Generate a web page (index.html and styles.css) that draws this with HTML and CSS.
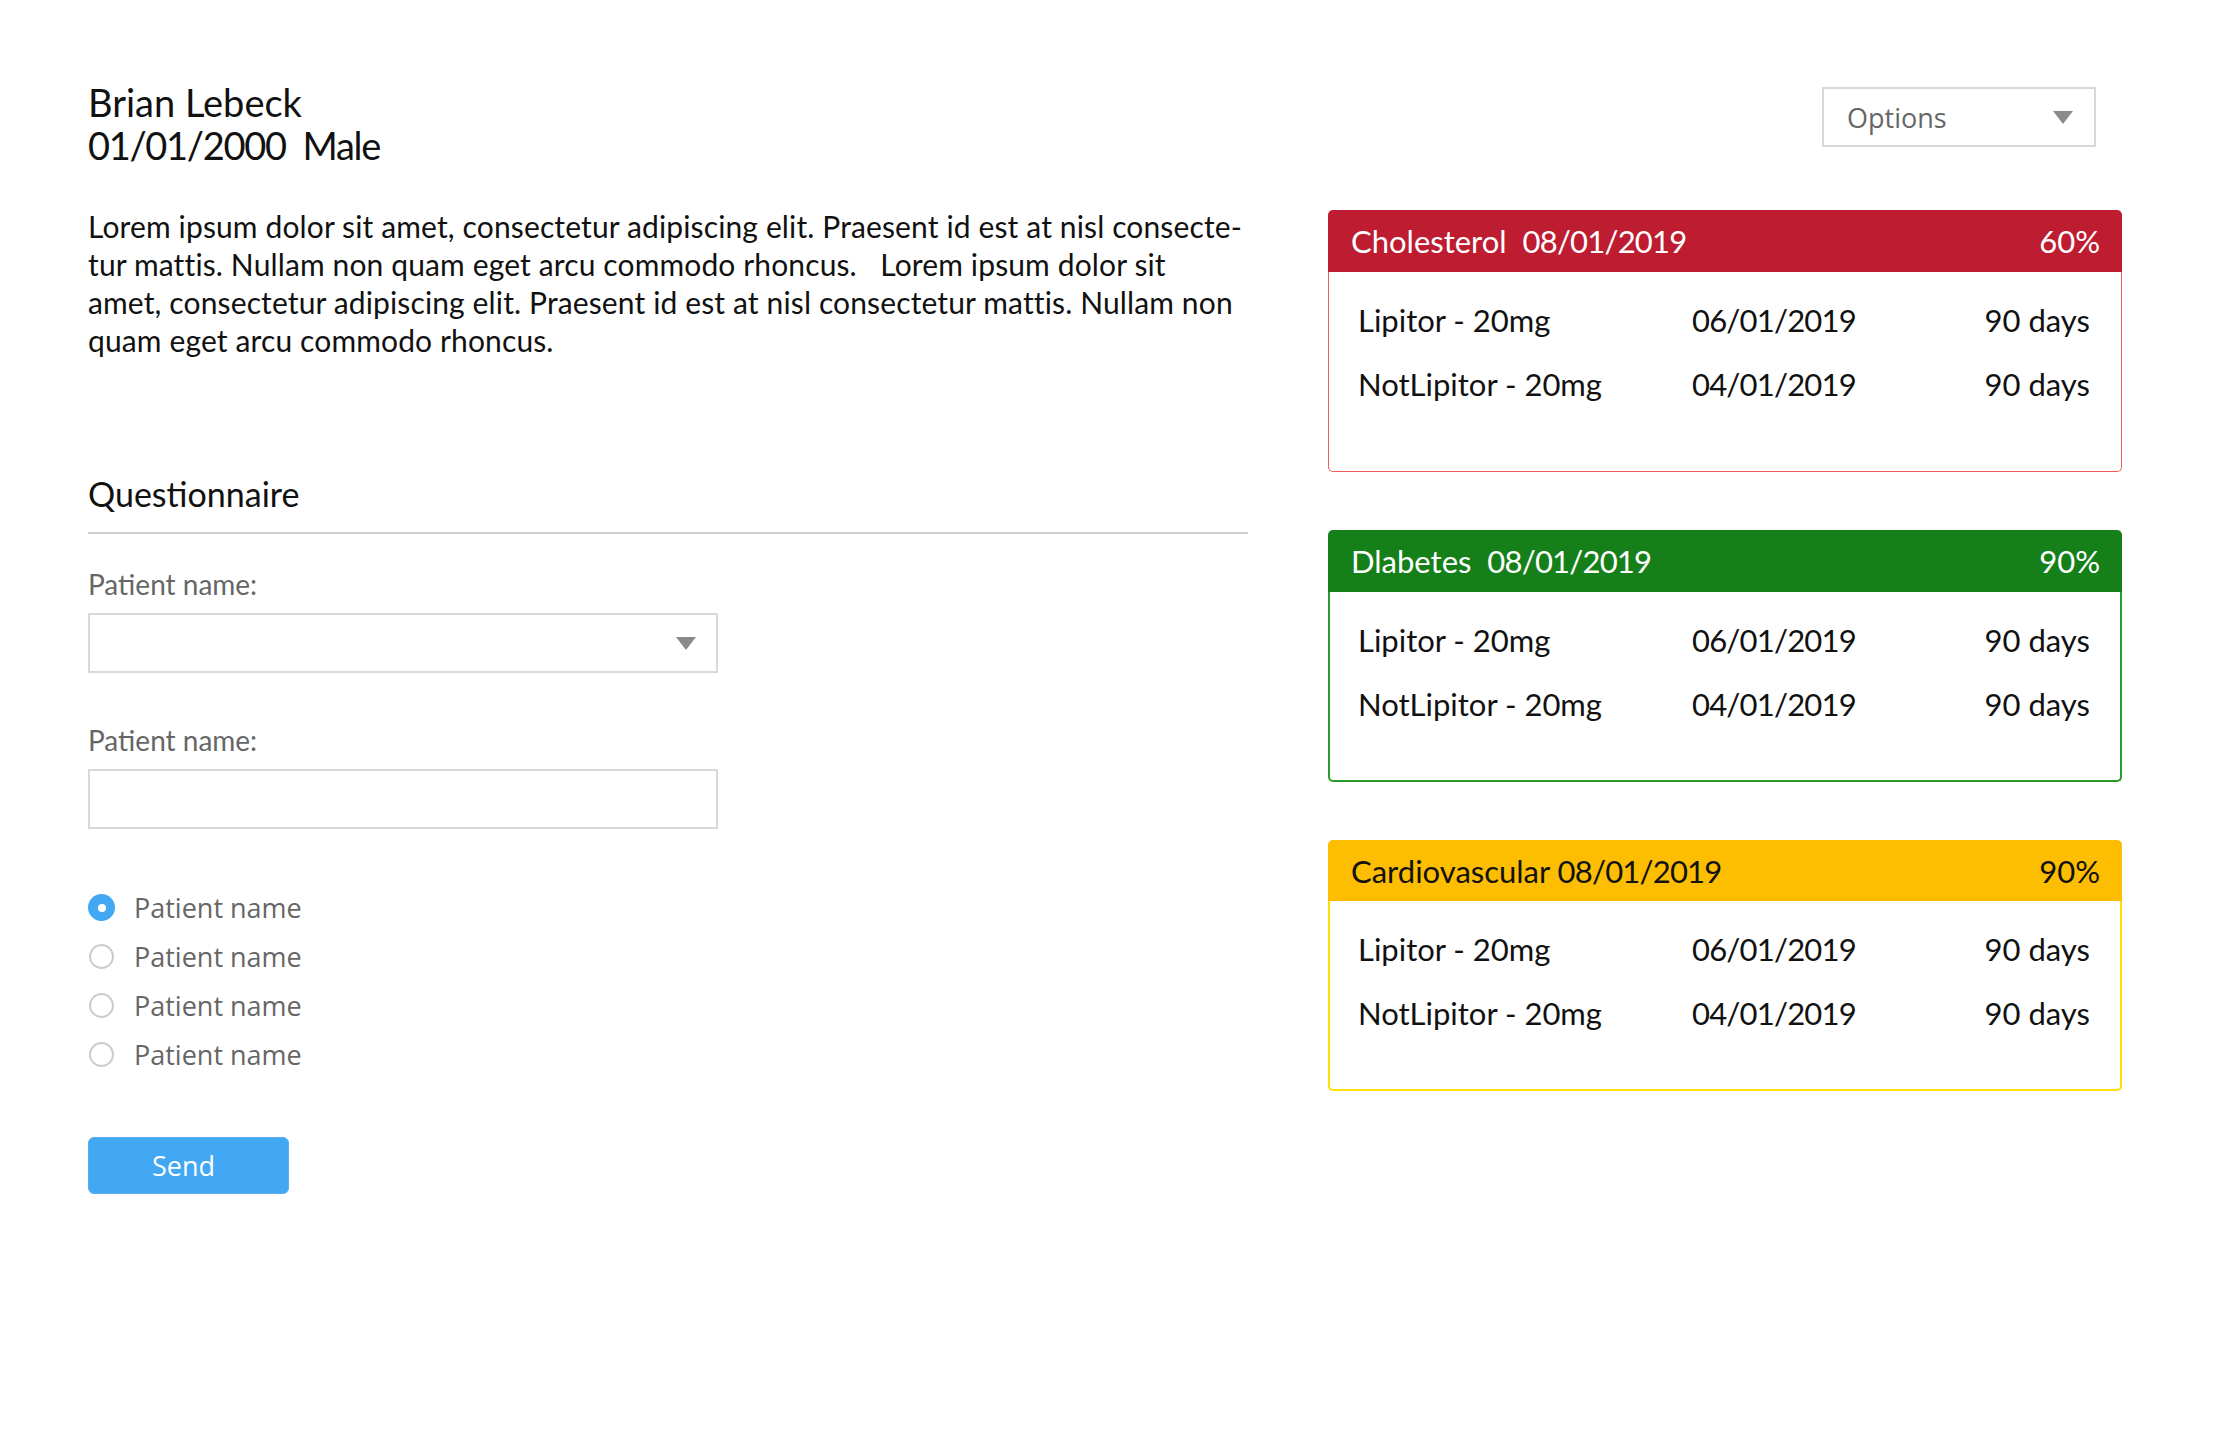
FILE: index.html
```html
<!DOCTYPE html>
<html>
<head>
<meta charset="utf-8">
<link rel="stylesheet" href="styles.css">
</head>
<body>
<div class="page">
  <div class="left">
    <div class="patient">
      <div class="patient-line">Brian Lebeck</div>
      <div class="patient-line patient-meta">01/01/2000&nbsp; Male</div>
    </div>
    <p class="bio">Lorem ipsum dolor sit amet, consectetur adipiscing elit. Praesent id est at nisl consecte-<br>tur mattis. Nullam non quam eget arcu commodo rhoncus.&nbsp;&nbsp; Lorem ipsum dolor sit<br>amet, consectetur adipiscing elit. Praesent id est at nisl consectetur mattis. Nullam non<br>quam eget arcu commodo rhoncus.</p>

    <section class="quest">
      <h2 class="quest-title">Questionnaire</h2>
      <div class="field field-first">
        <div class="field-label">Patient name:</div>
        <div class="box"><span class="caret"></span></div>
      </div>
      <div class="field field-second">
        <div class="field-label">Patient name:</div>
        <div class="box"></div>
      </div>
      <div class="radios">
        <div class="radio-row"><span class="radio radio-on"></span><span class="radio-label">Patient name</span></div>
        <div class="radio-row"><span class="radio"></span><span class="radio-label">Patient name</span></div>
        <div class="radio-row"><span class="radio"></span><span class="radio-label">Patient name</span></div>
        <div class="radio-row"><span class="radio"></span><span class="radio-label">Patient name</span></div>
      </div>
      <div class="send">Send</div>
    </section>
  </div>

  <div class="right">
    <div class="options-row">
      <div class="options"><span class="options-text">Options</span><span class="caret"></span></div>
    </div>

    <div class="card card-red">
      <div class="card-head"><span>Cholesterol&nbsp; <span class="num">08/01/2019</span></span><span>60%</span></div>
      <div class="card-body">
        <div class="med"><span>Lipitor - 20mg</span><span class="num">06/01/2019</span><span>90 days</span></div>
        <div class="med"><span>NotLipitor - 20mg</span><span class="num">04/01/2019</span><span>90 days</span></div>
      </div>
    </div>

    <div class="card card-green">
      <div class="card-head"><span>Dlabetes&nbsp; <span class="num">08/01/2019</span></span><span>90%</span></div>
      <div class="card-body">
        <div class="med"><span>Lipitor - 20mg</span><span class="num">06/01/2019</span><span>90 days</span></div>
        <div class="med"><span>NotLipitor - 20mg</span><span class="num">04/01/2019</span><span>90 days</span></div>
      </div>
    </div>

    <div class="card card-yellow">
      <div class="card-head"><span>Cardiovascular <span class="num">08/01/2019</span></span><span>90%</span></div>
      <div class="card-body">
        <div class="med"><span>Lipitor - 20mg</span><span class="num">06/01/2019</span><span>90 days</span></div>
        <div class="med"><span>NotLipitor - 20mg</span><span class="num">04/01/2019</span><span>90 days</span></div>
      </div>
    </div>
  </div>
</div>
</body>
</html>
```

FILE: styles.css
```css
* { box-sizing: border-box; }
html, body { margin: 0; padding: 0; background: #ffffff; }
body {
  font-family: Lato, "Open Sans", sans-serif;
  color: #111111;
}
.page {
  display: flex;
  gap: 80px;
  padding-left: 88px;
}
.left {
  width: 1160px;
  padding-top: 81px;
}
.patient-line {
  font-size: 38px;
  line-height: 43px;
}
.patient-meta {
  letter-spacing: -1.3px;
}
.bio {
  margin: 40px 0 0 0;
  font-size: 30px;
  line-height: 38px;
  letter-spacing: 0.13px;
  white-space: nowrap;
}
.quest-title {
  margin: 118px 0 0 0;
  font-weight: 400;
  font-size: 34px;
  line-height: 34px;
  padding-bottom: 21px;
  border-bottom: 2px solid #cfcfcf;
}
.field-first { margin-top: 36px; }
.field-second { margin-top: 53px; }
.field-label {
  font-size: 28px;
  line-height: 28px;
  color: #666666;
}
.box {
  margin-top: 15px;
  width: 630px;
  height: 60px;
  border: 2px solid #d9d9d9;
  display: flex;
  align-items: center;
  justify-content: flex-end;
  padding-right: 20px;
}
.caret {
  width: 0;
  height: 0;
  border-left: 10px solid transparent;
  border-right: 10px solid transparent;
  border-top: 13px solid #8a8a8a;
}
.radios {
  margin-top: 54px;
  display: flex;
  flex-direction: column;
}
.radio-row {
  height: 49px;
  display: flex;
  align-items: center;
}
.radio {
  width: 25px;
  height: 25px;
  margin-left: 1px;
  margin-right: 20px;
  border: 2px solid #cccccc;
  border-radius: 50%;
  display: flex;
  align-items: center;
  justify-content: center;
}
.radio-on {
  width: 27px;
  height: 27px;
  margin-left: 0;
  margin-right: 19px;
  border: none;
  background: #42a8f4;
}
.radio-on::after {
  content: "";
  width: 8px;
  height: 8px;
  border-radius: 50%;
  background: #ffffff;
}
.radio-label {
  font-family: "Open Sans", sans-serif;
  font-size: 27px;
  color: #666666;
}
.send {
  margin-top: 58px;
  width: 201px;
  height: 57px;
  border: 1px solid #5aaef0;
  border-radius: 6px;
  background: #42a8f4;
  color: #ffffff;
  font-family: "Open Sans", sans-serif;
  font-size: 27px;
  display: flex;
  align-items: center;
  justify-content: center;
  padding-right: 10px;
}
.right {
  width: 794px;
  padding-top: 87px;
}
.options-row {
  display: flex;
  justify-content: flex-end;
  padding-right: 26px;
}
.options {
  width: 274px;
  height: 60px;
  border: 2px solid #d8d8d8;
  display: flex;
  align-items: center;
  justify-content: space-between;
  padding: 0 21px 0 23px;
}
.options-text {
  font-family: "Open Sans", sans-serif;
  font-size: 27px;
  color: #666666;
}
.card { margin-top: 58px; }
.card-red { margin-top: 63px; }
.card-head {
  height: 62px;
  border-radius: 5px 5px 0 0;
  display: flex;
  align-items: center;
  justify-content: space-between;
  padding: 0 22px 0 23px;
  font-size: 31px;
  color: #ffffff;
}
.num { letter-spacing: -0.8px; }
.card-body {
  border: 2px solid;
  border-top: none;
  border-radius: 0 0 5px 5px;
  padding: 16px 30px 44px 28px;
}
.med {
  display: grid;
  grid-template-columns: 334px 1fr auto;
  font-size: 31px;
  line-height: 64px;
  color: #111111;
}
.card-red .card-head { background: #bd1c31; }
.card-red .card-body { border: 1px solid #f05a5a; border-top: none; padding: 16px 31px 55px 29px; }
.card-green .card-head { background: #15801a; }
.card-green .card-body { border-color: #2a9a2a; }
.card-yellow .card-head { background: #fdbd00; color: #111111; height: 61px; }
.card-yellow .card-body { border-color: #ffe000; }
```
